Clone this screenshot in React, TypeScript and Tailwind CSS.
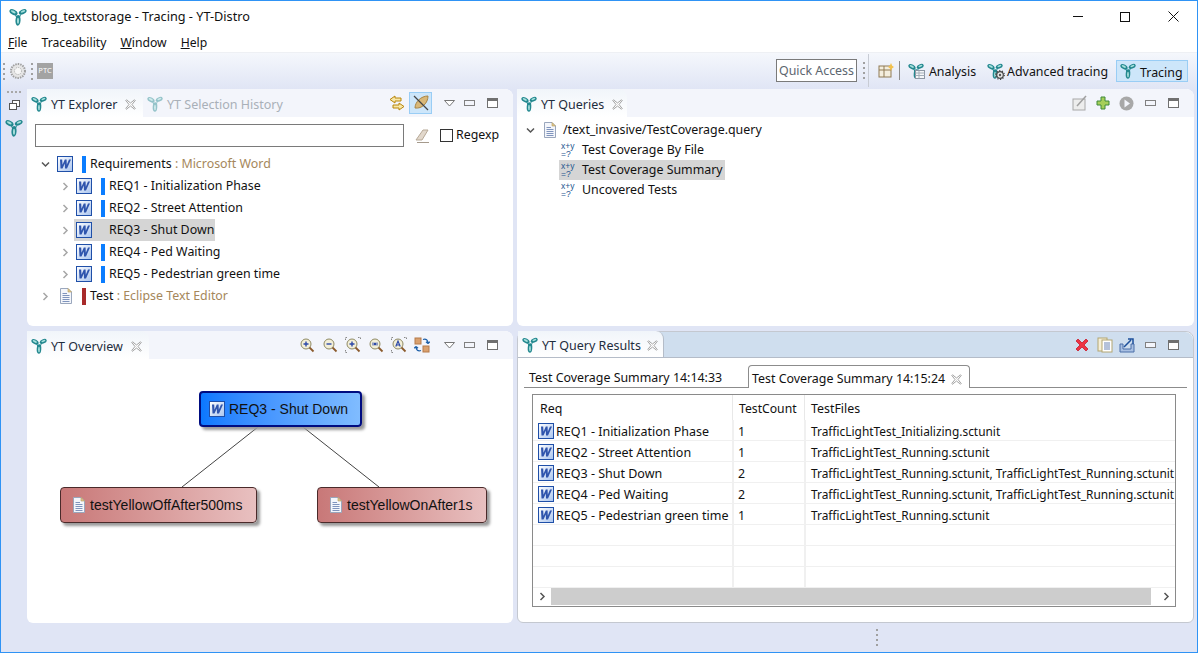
import React from "react";

const Logo = ({ size = 16, muted = false }: { size?: number; muted?: boolean }) => (
  <svg width={size} height={size} viewBox="0 0 16 16" className={muted ? "shrink-0 opacity-45" : "shrink-0"}>
    <ellipse cx="4" cy="3.800" rx="3.900" ry="2.300" transform="rotate(28 4 3.800)" fill="#23888f" />
    <ellipse cx="12.200" cy="3.400" rx="3.700" ry="2.100" transform="rotate(-24 12.200 3.400)" fill="#23888f" />
    <ellipse cx="8" cy="11" rx="2.300" ry="4.700" transform="rotate(4 8 11)" fill="#23888f" />
    <path d="M5 5 8 8 11 5 9.500 9H6.500Z" fill="#23888f" />
    <ellipse cx="3.800" cy="3.400" rx="2.300" ry="1" transform="rotate(28 3.800 3.400)" fill="#a8e0dc" />
    <ellipse cx="12.400" cy="3" rx="2.100" ry=".9" transform="rotate(-24 12.400 3)" fill="#a8e0dc" />
    <ellipse cx="8" cy="11.500" rx=".9" ry="2.800" fill="#a8e0dc" />
  </svg>
);

const AnalysisLogo = () => (
  <span className="relative block h-[16px] w-[16px] shrink-0">
    <Logo />
    <svg width="10" height="9" viewBox="0 0 10 9" className="absolute bottom-0 right-[-1px]">
      <rect x=".5" y=".5" width="9" height="8" fill="#f4f6f8" stroke="#8c96a3" />
      <path d="M.5 3H9.500M.5 5.500H9.500M4 .5V8.500" stroke="#a3adb8" />
    </svg>
  </span>
);

const TracingLogo = () => (
  <span className="relative block h-[16px] w-[16px] shrink-0">
    <Logo />
    <svg width="10" height="10" viewBox="0 0 10 10" className="absolute bottom-[-1px] right-[-2px]">
      <circle cx="5" cy="5" r="3.300" fill="#e8e8e8" stroke="#444" strokeWidth="1.200" />
      <circle cx="5" cy="5" r="4.300" fill="none" stroke="#444" strokeWidth="1.200" strokeDasharray="1.200 1.500" />
      <circle cx="5" cy="5" r="1.200" fill="#555" />
    </svg>
  </span>
);

const WordIcon = ({ size = 16 }: { size?: number }) => (
  <svg width={size} height={size} viewBox="0 0 16 16" className="shrink-0">
    <defs>
      <linearGradient id="wordFill" x1="0" y1="0" x2="1" y2="1">
        <stop offset="0" stopColor="#ffffff" />
        <stop offset="1" stopColor="#a9c4ee" />
      </linearGradient>
    </defs>
    <rect x=".5" y=".5" width="15" height="15" fill="url(#wordFill)" stroke="#1f4fa8" />
    <path d="M3 3.500 3.500 12.500H5.500L7.800 7.500 8 12.500H10L14 3.500H12L9.800 8.800 9.600 3.500H7.800L5.500 8.800 5.200 3.500Z" fill="#2f55ad" />
  </svg>
);

const DocIcon = () => (
  <svg width="14" height="16" viewBox="0 0 14 16" className="shrink-0">
    <path d="M1.500 .5H9L12.500 4V15.500H1.500Z" fill="#f4f6fb" stroke="#9aa7bd" />
    <path d="M9 .5V4H12.500Z" fill="#e3c98a" stroke="#b19a5e" strokeWidth=".6" />
    <path d="M3.500 5.500H8M3.500 7.500H10.500M3.500 9.500H10.500M3.500 11.500H10.500M3.500 13.500H10.500" stroke="#7f94bd" />
  </svg>
);

const QueryIcon = () => (
  <span className="flex h-[16px] w-[16px] shrink-0 flex-col font-['Liberation_Sans',sans-serif] text-[8.5px] leading-[8px] text-[#24568f]">
    <span>x+y</span>
    <span>=?</span>
  </span>
);

const Minimize = () => <span className="block h-[6px] w-[11px] border border-[#808080] bg-[#f3f5fb]" />;
const Maximize = () => (
  <span className="block h-[10px] w-[11px] border border-[#707070] border-t-[3px] bg-white" />
);
const ViewMenu = () => (
  <svg width="11" height="7" viewBox="0 0 11 7" className="block shrink-0">
    <path d="M.5 .5H10.500L5.500 6Z" fill="#fff" stroke="#777" />
  </svg>
);
const CloseX = () => (
  <svg width="11" height="11" viewBox="0 0 11 11" className="block shrink-0">
    <path d="M1.500 .8 5.500 4 9.500 .8 10.200 1.500 7 5.500 10.200 9.500 9.500 10.200 5.500 7 1.500 10.200 .8 9.500 4 5.500 .8 1.500Z" fill="#fff" stroke="#8c8c8c" strokeWidth=".8" />
  </svg>
);
const Chevron = ({ open = false, dark = false }: { open?: boolean; dark?: boolean }) => (
  <svg width="9" height="9" viewBox="0 0 9 9" className="shrink-0">
    <path d={open ? "M1 2.500 4.500 6 8 2.500" : "M2.500 1 6 4.500 2.500 8"} fill="none" stroke={dark || open ? "#555" : "#a6a6a6"} strokeWidth="1.500" />
  </svg>
);

const Zoom = ({ glyph, framed = false }: { glyph: "+" | "-" | "o" | "A"; framed?: boolean }) => (
  <svg width="16" height="16" viewBox="0 0 16 16" className="shrink-0">
    {framed && <path d="M.5 3V.5H3M13 .5H15.500V3M.5 13V15.500H3" fill="none" stroke="#888" strokeDasharray="1.500 1" />}
    <circle cx="7" cy="7" r="5" fill="#f3efd8" stroke="#8f8a63" />
    <path d="M10.500 10.500 14.500 14.500" stroke="#8a5a2b" strokeWidth="1.800" />
    {glyph === "+" && <path d="M4.500 7H9.500M7 4.500V9.500" stroke="#2c49a8" strokeWidth="1.400" />}
    {glyph === "-" && <path d="M4.500 7H9.500" stroke="#2c49a8" strokeWidth="1.400" />}
    {glyph === "o" && <path d="M5 5.500V8.500M9 5.500V8.500M6.500 6H7.500V8H6.500Z" stroke="#2c49a8" fill="none" />}
    {glyph === "A" && <path d="M4.800 9.500 7 4 9.200 9.500M5.600 8H8.400" stroke="#2c49a8" fill="none" strokeWidth="1.200" />}
  </svg>
);

const Layout = () => (
  <svg width="16" height="16" viewBox="0 0 16 16" className="shrink-0">
    <rect x="1" y="1" width="6" height="6" fill="#d9a06e" stroke="#b57a4a" />
    <rect x="9" y="9" width="6" height="6" fill="#d9a06e" stroke="#b57a4a" />
    <path d="M9 2.500C12 1.500 14 3 14 6.500M14 6.500 12 4.800M14 6.500 15.800 4.800M7 13.500C4 14.500 2 13 2 9.500M2 9.500 .2 11.200M2 9.500 4 11.200" fill="none" stroke="#1d5fa8" strokeWidth="1.300" />
  </svg>
);

const Bar = ({ color = "bg-[#0a7dff]" }: { color?: string }) => <span className={`block h-[17px] w-1 shrink-0 ${color}`} />;

const treeItems = ["REQ1 - Initialization Phase", "REQ2 - Street Attention", "REQ3 - Shut Down", "REQ4 - Ped Waiting", "REQ5 - Pedestrian green time"];

const rows = [
  ["REQ1 - Initialization Phase", "1", "TrafficLightTest_Initializing.sctunit"],
  ["REQ2 - Street Attention", "1", "TrafficLightTest_Running.sctunit"],
  ["REQ3 - Shut Down", "2", "TrafficLightTest_Running.sctunit, TrafficLightTest_Running.sctunit"],
  ["REQ4 - Ped Waiting", "2", "TrafficLightTest_Running.sctunit, TrafficLightTest_Running.sctunit"],
  ["REQ5 - Pedestrian green time", "1", "TrafficLightTest_Running.sctunit"],
  ["", "", ""],
  ["", "", ""],
  ["", "", ""],
];

const ViewTab = ({ label, width }: { label: string; width: string }) => (
  <div className={`flex h-[28px] items-center gap-[4px] rounded-tr-lg bg-gradient-to-b from-[#f1f5fa] to-white pl-[4px] pt-[2px] text-[12.5px] ${width}`}>
    <Logo />
    <span className="pt-[3px] text-[#1f2d3d]">{label}</span>
    <span className="ml-[4px]"><CloseX /></span>
  </div>
);

const Explorer = () => (
  <section className="flex flex-col rounded-t-lg rounded-b-md bg-white">
    <header className="flex h-[28px] items-center rounded-t-lg bg-[#f3f5fb]">
      <ViewTab label="YT Explorer" width="w-[116px]" />
      <div className="flex h-full items-center gap-[4px] pl-[4px] pt-[2px] text-[12.5px] text-[#a9b0b8]">
        <Logo muted />
        <span className="pt-[3px]">YT Selection History</span>
      </div>
      <div className="ml-auto flex items-center pr-[15px]">
        <svg width="16" height="16" viewBox="0 0 16 16" className="mr-[4px]">
          <path d="M6 1 1 4.500 6 8V6H12V3H6ZM10 8 15 11.500 10 15V13H4V10H10Z" fill="#f7e7a8" stroke="#b8860b" />
        </svg>
        <span className="mr-[12px] flex h-[22px] w-[23px] items-center justify-center border border-[#99cdf5] bg-[#cde6fa]">
          <svg width="18" height="18" viewBox="0 0 18 18">
            <path d="M3 14C3 8 9 2 16 2 16 9 10 15 3 14Z" fill="#d9b878" stroke="#a98545" />
            <path d="M2 2 16 16" stroke="#444" strokeWidth="1.200" />
          </svg>
        </span>
        <span className="mr-[9px]"><ViewMenu /></span>
        <span className="mr-[12px]"><Minimize /></span>
        <Maximize />
      </div>
    </header>
    <div className="flex items-center pl-[8px] pt-[7px]">
      <input className="h-[23px] w-[369px] border border-[#7a7a7a] bg-white" aria-label="filter" />
      <svg width="16" height="16" viewBox="0 0 16 16" className="ml-[10px]">
        <path d="M2 12 9 2H14L8 12Z" fill="#e2d8cc" stroke="#b7a997" />
        <path d="M3 14.500H15" stroke="#a59a8c" />
      </svg>
      <span className="ml-[10px] h-[13px] w-[13px] border border-[#333] bg-white" />
      <span className="ml-[3px] text-[#111]">Regexp</span>
    </div>
    <div className="flex flex-col pt-[6px] text-[#111]">
      <div className="flex h-[22px] items-center pl-[14px]">
        <Chevron open />
        <span className="ml-[7px]"><WordIcon /></span>
        <span className="ml-[9px]"><Bar /></span>
        <span className="ml-[4px]">Requirements <span className="text-[#a5875b]">: Microsoft Word</span></span>
      </div>
      {treeItems.map((t, i) => (
        <div key={t} className="flex h-[22px] items-center pl-[34px]">
          <Chevron />
          <div className={`ml-[4px] flex h-[22px] items-center pl-[2px] pr-[1px] ${i === 2 ? "bg-[#d5d5d5]" : ""}`}>
            <WordIcon />
            <span className="ml-[9px]">{i === 2 ? <span className="block w-1" /> : <Bar />}</span>
            <span className="ml-[4px]">{t}</span>
          </div>
        </div>
      ))}
      <div className="flex h-[22px] items-center pl-[14px]">
        <Chevron />
        <span className="ml-[9px]"><DocIcon /></span>
        <span className="ml-[9px]"><Bar color="bg-[#a82a2a]" /></span>
        <span className="ml-[4px]">Test <span className="text-[#a5875b]">: Eclipse Text Editor</span></span>
      </div>
    </div>
  </section>
);

const Queries = () => (
  <section className="flex flex-col rounded-t-lg rounded-b-md bg-white">
    <header className="flex h-[28px] items-center rounded-t-lg bg-[#f3f5fb]">
      <ViewTab label="YT Queries" width="w-[110px]" />
      <div className="ml-auto flex items-center pr-[15px]">
        <svg width="16" height="16" viewBox="0 0 16 16" className="mr-[8px]">
          <rect x="1" y="4" width="12" height="11" fill="#ededed" stroke="#a8a8a8" />
          <path d="M5 11 14 1" stroke="#a0a0a0" strokeWidth="1.500" />
        </svg>
        <svg width="14" height="14" viewBox="0 0 14 14" className="mr-[9px]">
          <path d="M5 1H9V5H13V9H9V13H5V9H1V5H5Z" fill="#a6cf5a" stroke="#3f8a3a" />
        </svg>
        <svg width="15" height="15" viewBox="0 0 15 15" className="mr-[11px]">
          <circle cx="7.500" cy="7.500" r="7" fill="#a8a8a8" />
          <path d="M5.500 3.500 11 7.500 5.500 11.500Z" fill="#f3f5fb" />
        </svg>
        <span className="mr-[12px]"><Minimize /></span>
        <Maximize />
      </div>
    </header>
    <div className="flex flex-col pt-[3px] text-[#111]">
      <div className="flex h-[20px] items-center pl-[9px]">
        <Chevron open />
        <span className="ml-[8px]"><DocIcon /></span>
        <span className="ml-[6px]">/text_invasive/TestCoverage.query</span>
      </div>
      {["Test Coverage By File", "Test Coverage Summary", "Uncovered Tests"].map((t, i) => (
        <div key={t} className="flex h-[20px] items-center pl-[42px]">
          <div className={`flex h-[20px] items-center pl-[2px] pr-[2px] ${i === 1 ? "bg-[#d5d5d5]" : ""}`}>
            <QueryIcon />
            <span className="ml-[5px]">{t}</span>
          </div>
        </div>
      ))}
    </div>
  </section>
);

const Node = ({ label, className, word = false }: { label: string; className: string; word?: boolean }) => (
  <div className={`absolute flex h-[36px] items-center font-['Liberation_Sans',sans-serif] text-[14px] text-[#111] shadow-[3px_3px_3px_#9a9a9a] ${className}`}>
    {word ? <WordIcon /> : <DocIcon />}
    <span className="ml-[4px]">{label}</span>
  </div>
);

const Overview = () => (
  <section className="flex flex-col rounded-t-lg rounded-b-md bg-white">
    <header className="flex h-[28px] items-center rounded-t-lg bg-[#f3f5fb]">
      <ViewTab label="YT Overview" width="w-[122px]" />
      <div className="ml-auto flex items-center pr-[15px]">
        <div className="mr-[14px] flex items-center gap-[7px]">
          <Zoom glyph="+" />
          <Zoom glyph="-" />
          <Zoom glyph="+" framed />
          <Zoom glyph="o" />
          <Zoom glyph="A" framed />
          <Layout />
        </div>
        <span className="mr-[9px]"><ViewMenu /></span>
        <span className="mr-[12px]"><Minimize /></span>
        <Maximize />
      </div>
    </header>
    <div className="relative flex-1">
      <svg className="absolute inset-0 h-full w-full">
        <path d="M231 68 155 128M276 68 352 128" stroke="#444" fill="none" />
      </svg>
      <Node word label="REQ3 - Shut Down" className="left-[172px] top-[32px] w-[163px] rounded border-2 border-[#000c80] bg-gradient-to-r from-[#0a78ff] to-[#80bcff] pl-[8px]" />
      <Node label="testYellowOffAfter500ms" className="left-[33px] top-[128px] w-[197px] rounded border border-[#4a2a2a] bg-gradient-to-r from-[#c87878] to-[#e8c0c0] pl-[11px]" />
      <Node label="testYellowOnAfter1s" className="left-[290px] top-[128px] w-[170px] rounded border border-[#4a2a2a] bg-gradient-to-r from-[#c87878] to-[#e8c0c0] pl-[11px]" />
    </div>
  </section>
);

const Results = () => (
  <section className="flex flex-col rounded-t-lg rounded-b-md border border-[#c4c8d0] bg-white">
    <header className="flex h-[26px] items-end rounded-t-lg border-b border-[#b4bcc8] bg-[#cfdeee]">
      <div className="flex h-[26px] w-[146px] items-center gap-[4px] rounded-tr-lg border-r border-[#b4bcc8] bg-gradient-to-b from-[#f1f5fa] to-white pl-[4px] pt-[2px] text-[12.5px]">
        <Logo />
        <span className="pt-[3px] text-[#1f2d3d]">YT Query Results</span>
        <span className="ml-[2px]"><CloseX /></span>
      </div>
      <div className="ml-auto flex h-full items-center pr-[14px]">
        <svg width="14" height="14" viewBox="0 0 14 14" className="mr-[8px]">
          <path d="M3 1 7 5 11 1 13 3 9 7 13 11 11 13 7 9 3 13 1 11 5 7 1 3Z" fill="#ee3344" stroke="#cc3344" />
        </svg>
        <svg width="16" height="16" viewBox="0 0 16 16" className="mr-[6px]">
          <rect x="1" y="1" width="9" height="13" fill="#f5efd8" stroke="#b3a570" />
          <rect x="5" y="3" width="10" height="12" fill="#fff" stroke="#b3a570" />
          <path d="M7 6H13M7 8H13M7 10H13M7 12H13" stroke="#6a84b5" />
        </svg>
        <svg width="16" height="16" viewBox="0 0 16 16" className="mr-[10px]">
          <path d="M1 7V15H15V7H12V12H4V7Z" fill="#a9c0e2" stroke="#4a6fa8" />
          <path d="M5 10 12 3M9 2H14V7" fill="none" stroke="#1d4f9a" strokeWidth="1.500" />
        </svg>
        <span className="mr-[12px]"><Minimize /></span>
        <Maximize />
      </div>
    </header>
    <div className="box-content flex h-[23px] items-end px-[6px] pt-[7px]">
      <div className="flex h-[23px] w-[224px] items-center border-b border-[#8c8c8c] pl-[5px] pt-[5px] text-[#111]">Test Coverage Summary 14:14:33</div>
      <div className="flex h-[23px] w-[222px] items-center gap-[6px] rounded-t border border-b-0 border-[#8c8c8c] pl-[3px] pt-[4px] text-[#111]">
        Test Coverage Summary 14:15:24
        <CloseX />
      </div>
      <div className="h-[23px] flex-1 border-b border-[#8c8c8c]" />
    </div>
    <div className="ml-[14px] mr-[17px] mt-[6px] flex h-[213px] flex-col border border-[#8a8a8a] text-[#111]">
      <div className="grid h-[25px] grid-cols-[199px_72px_1fr] items-center">
        <span className="pl-[7px] pt-[2px]">Req</span>
        <span className="border-l border-[#e8e8e8] pl-[6px] text-[12.2px] leading-[27px]">TestCount</span>
        <span className="border-l border-[#e8e8e8] pl-[6px] leading-[27px]">TestFiles</span>
      </div>
      {rows.map((r, i) => (
        <div key={i} className="grid h-[21px] grid-cols-[199px_72px_1fr] items-center border-b border-[#f0f0f0]">
          <span className="flex h-[20px] items-center gap-[2px] overflow-hidden whitespace-nowrap pl-[5px] pt-[2px] text-[12.5px]">
            {r[0] && <WordIcon />}
            <span className="pt-[2px]">{r[0]}</span>
          </span>
          <span className="h-[20px] border-l-2 border-[#f0f0f0] pl-[4px] pt-[2px] leading-[20px]">{r[1]}</span>
          <span className="h-[20px] overflow-hidden whitespace-nowrap border-l-2 border-[#f0f0f0] pl-[5px] pt-[1px] text-[11.9px] leading-[20px]">{r[2]}</span>
        </div>
      ))}
      <div className="flex h-[17px] items-center">
        <span className="flex w-[18px] justify-center"><Chevron dark /></span>
        <span className="h-full flex-1 bg-[#cdcdcd]" />
        <span className="flex w-[24px] justify-center pl-[6px]"><Chevron dark /></span>
      </div>
    </div>
  </section>
);

const Dots = ({ n = 4 }: { n?: number }) => (
  <div className="flex flex-col gap-[3px]">
    {Array.from({ length: n }).map((_, i) => <span key={i} className="h-[2px] w-[2px] bg-[#a0a0a0]" />)}
  </div>
);

export default function App() {
  return (
    <div className="flex h-[653px] w-[1198px] flex-col overflow-hidden border border-[#2f93f5] bg-[#e0e5f5] font-['Noto_Sans',sans-serif] text-[12.4px] leading-none">
      <div className="flex h-[29px] shrink-0 items-center bg-white pl-[8px] pt-[2px] text-[#111]">
        <Logo size={18} />
        <span className="ml-[4px] pb-[1px] text-[12.7px]">blog_textstorage - Tracing - YT-Distro</span>
        <div className="ml-auto flex items-center">
          <span className="mr-[37px] block h-px w-[10px] bg-[#111]" />
          <span className="mr-[38px] block h-[10px] w-[10px] border border-[#111]" />
          <svg width="11" height="11" viewBox="0 0 11 11" className="mr-[18px]"><path d="M.5 .5 10.500 10.500M10.500 .5 .5 10.500" stroke="#111" /></svg>
        </div>
      </div>
      <nav className="flex h-[22px] shrink-0 items-center gap-[14px] bg-white pl-[7px] pt-[4px] text-[12.2px] text-[#111]">
        <span><span className="underline">F</span>ile</span>
        <span>Traceability</span>
        <span><span className="underline">W</span>indow</span>
        <span><span className="underline">H</span>elp</span>
      </nav>
      <div className="flex h-[37px] shrink-0 items-center border-t border-[#eef0f4] bg-gradient-to-b from-[#f5f7fc] to-[#e0e5f5] pl-[2px]">
        <Dots n={4} />
        <svg width="16" height="16" viewBox="0 0 16 16" className="ml-[5px]">
          <circle cx="8" cy="8" r="7" fill="#e5e5e5" stroke="#a0a0a0" strokeDasharray="1.500 1" strokeWidth="2" />
          <circle cx="8" cy="8" r="3.500" fill="#f7f7f7" stroke="#aaa" strokeDasharray="1 1" />
        </svg>
        <span className="ml-[5px]"><Dots n={4} /></span>
        <span className="ml-[4px] flex h-[16px] w-[16px] items-center justify-center bg-[#a3a3a3] text-[7.5px] text-white">PTC</span>
        <div className="ml-auto flex items-center pb-[1px] pr-[9px]">
          <span className="flex h-[23px] w-[81px] items-center justify-center border border-[#7a7a7a] bg-white pt-[1px] text-[#5d6670]">Quick Access</span>
          <span className="ml-[6px]"><Dots n={4} /></span>
          <span className="ml-[3px] h-[33px] w-px bg-[#c8ccd4]" />
          <svg width="16" height="16" viewBox="0 0 16 16" className="ml-[9px]">
            <rect x="1" y="3" width="12" height="11" fill="#f4eede" stroke="#8f7a55" />
            <path d="M1 7H13M6 3V14" stroke="#8f7a55" />
            <path d="M13 0 14.200 2.800 16 4 14.200 5.200 13 8 11.800 5.200 10 4 11.800 2.800Z" fill="#f2c14e" />
          </svg>
          <span className="ml-[5px] h-[19px] w-px bg-[#8c8c8c]" />
          <span className="ml-[8px]"><AnalysisLogo /></span>
          <span className="ml-[5px] pt-[4px] text-[#111]">Analysis</span>
          <span className="ml-[11px]"><TracingLogo /></span>
          <span className="ml-[4px] pt-[4px] text-[#111]">Advanced tracing</span>
          <span className="ml-[8px] flex h-[22px] w-[72px] items-center gap-[4px] border border-[#99cdf5] bg-[#cde6fa] pl-[3px] pt-[1px] text-[#111]">
            <Logo />
            <span className="pt-[4px]">Tracing</span>
          </span>
        </div>
      </div>
      <div className="flex shrink-0">
        <aside className="flex w-[26px] shrink-0 flex-col items-center pt-[2px]">
          <div className="flex gap-[2px]">
            {[0, 1, 2, 3].map((i) => <span key={i} className="h-[2px] w-[2px] bg-[#a8a8a8]" />)}
          </div>
          <svg width="11" height="11" viewBox="0 0 11 11" className="mt-[7px]">
            <rect x="3.500" y=".5" width="7" height="6" fill="#fff" stroke="#555" />
            <rect x=".5" y="3.500" width="7" height="6" fill="#fff" stroke="#555" />
          </svg>
          <span className="mt-[8px]"><Logo size={18} /></span>
        </aside>
        <main className="grid grid-cols-[486px_677px] grid-rows-[237px_292px] gap-x-[4px] gap-y-[5px]">
          <Explorer />
          <Queries />
          <Overview />
          <Results />
        </main>
      </div>
      <footer className="flex flex-1 items-center pl-[875px]">
        <Dots n={4} />
      </footer>
    </div>
  );
}
